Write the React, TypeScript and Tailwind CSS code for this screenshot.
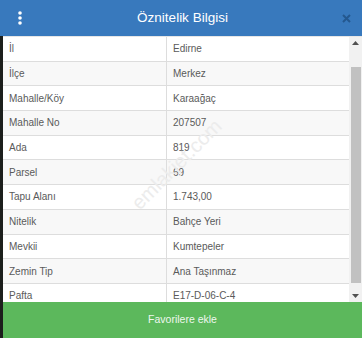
import React from "react";

const rows: [string, string][] = [
  ["İl", "Edirne"],
  ["İlçe", "Merkez"],
  ["Mahalle/Köy", "Karaağaç"],
  ["Mahalle No", "207507"],
  ["Ada", "819"],
  ["Parsel", "69"],
  ["Tapu Alanı", "1.743,00"],
  ["Nitelik", "Bahçe Yeri"],
  ["Mevkii", "Kumtepeler"],
  ["Zemin Tip", "Ana Taşınmaz"],
  ["Pafta", "E17-D-06-C-4"],
];

export default function App() {
  return (
    <div
      className="w-[362px] h-[338px] overflow-hidden flex flex-col bg-[#1c1f1c] relative"
      style={{ fontFamily: '"Liberation Sans", Arial, sans-serif' }}
    >
      <div className="h-[36px] shrink-0 bg-[#3879bd] flex items-center justify-between pl-[17px] pr-[11px]">
        <svg width="6" height="14" viewBox="0 0 6 14">
          <circle cx="3" cy="2" r="1.8" fill="#fff" />
          <circle cx="3" cy="7" r="1.8" fill="#fff" />
          <circle cx="3" cy="12" r="1.8" fill="#fff" />
        </svg>
        <div className="text-white text-[13.5px] leading-none pb-[1px]">Öznitelik Bilgisi</div>
        <svg width="9" height="9" viewBox="0 0 9 9" className="mt-[1px]">
          <path d="M1 1 L8 8 M8 1 L1 8" stroke="#24588f" strokeWidth="2" />
        </svg>
      </div>
      <div className="flex-1 flex pl-[3px]">
        <div className="flex-1 flex flex-col bg-white">
          <div className="h-[266px] flex border-t border-[#e6e6e6] relative overflow-hidden">
            <div
              className="absolute left-[115px] top-[116px] text-[20px] leading-[23px] text-[#ececec] pointer-events-none whitespace-nowrap"
              style={{ transform: "rotate(-45deg)" }}
            >
              emlakjet.com
            </div>
            <div className="flex-1 flex flex-col">
              {rows.map(([k, v], i) => (
                <div
                  key={k}
                  className={`h-[24.7px] shrink-0 flex border-b border-[#dddddd] text-[10px] text-[#5a5a5a] ${
                    i % 2 === 0 ? "bg-white/0" : "bg-[#f4f4f4]/60"
                  }`}
                >
                  <div className="w-[164px] flex items-center pl-[6px] border-r border-[#dddddd]">{k}</div>
                  <div className="flex-1 flex items-center pl-[6px]">{v}</div>
                </div>
              ))}
            </div>
            <div className="w-[13px] bg-[#f1f1f1] flex flex-col items-center">
              <svg width="7" height="4" viewBox="0 0 7 4" className="mt-[4px]">
                <path d="M0 4 L3.5 0 L7 4 Z" fill="#505050" />
              </svg>
              <div className="mt-[22px] w-[10px] h-[216px] bg-[#c1c1c1]" />
              <div className="flex-1" />
              <svg width="7" height="4" viewBox="0 0 7 4" className="mb-[4px]">
                <path d="M0 0 L3.5 4 L7 0 Z" fill="#505050" />
              </svg>
            </div>
          </div>
          <div className="flex-1 bg-[#5cb85c] flex items-center justify-center text-[10.5px] text-[#eef7ee]">
            Favorilere ekle
          </div>
        </div>
      </div>
    </div>
  );
}
